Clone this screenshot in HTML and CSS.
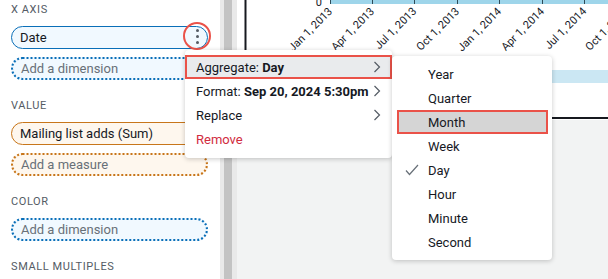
FILE: index.html
```html
<!DOCTYPE html>
<html lang="en">
<head>
  <meta charset="UTF-8" />
  <title>Field wells</title>
  <link rel="stylesheet" href="styles.css">
</head>
<body>
  <div class="sidebar">
    <div class="section">
      <div class="section-label">X axis</div>
      <div class="pill pill-dim">
        Date
        <span class="kebab"><i></i><i></i><i></i></span>
      </div>
      <div class="pill pill-dim pill-empty">Add a dimension</div>
    </div>
    <div class="section">
      <div class="section-label">Value</div>
      <div class="pill pill-measure">Mailing list adds (Sum)</div>
      <div class="pill pill-measure pill-empty">Add a measure</div>
    </div>
    <div class="section">
      <div class="section-label">Color</div>
      <div class="pill pill-dim pill-empty">Add a dimension</div>
    </div>
    <div class="section">
      <div class="section-label">Small multiples</div>
    </div>
  </div>

  <div class="scrollbar"><div class="thumb"></div></div>

  <div class="main">
    <div class="chart">
      <svg width="371" height="120" viewBox="0 0 371 120">
        <rect x="93" y="0" width="278" height="4" fill="#9ed5ea" />
        <g stroke="#2f4b57" stroke-width="1">
          <line x1="93.5" y1="0" x2="93.5" y2="4" />
          <line x1="135.5" y1="0" x2="135.5" y2="4" />
          <line x1="177.5" y1="0" x2="177.5" y2="4" />
          <line x1="220.5" y1="0" x2="220.5" y2="4" />
          <line x1="262.5" y1="0" x2="262.5" y2="4" />
          <line x1="305.5" y1="0" x2="305.5" y2="4" />
          <line x1="347.5" y1="0" x2="347.5" y2="4" />
        </g>
        <text class="axis-text" x="85" y="6" text-anchor="end">0</text>
        <g class="axis-text" text-anchor="end">
          <text transform="translate(96,12) rotate(-45)">Jan 1, 2013</text>
          <text transform="translate(138,12) rotate(-45)">Apr 1, 2013</text>
          <text transform="translate(180,12) rotate(-45)">Jul 1, 2013</text>
          <text transform="translate(223,12) rotate(-45)">Oct 1, 2013</text>
          <text transform="translate(265,12) rotate(-45)">Jan 1, 2014</text>
          <text transform="translate(308,12) rotate(-45)">Apr 1, 2014</text>
          <text transform="translate(350,12) rotate(-45)">Jul 1, 2014</text>
          <text transform="translate(392,12) rotate(-45)">Oct 1, 2014</text>
        </g>
        <rect x="8" y="70" width="363" height="13" fill="#cbe7f3" />
        <line x1="8.5" y1="0" x2="8.5" y2="119" stroke="#16191f" stroke-width="2" />
        <line x1="8" y1="118" x2="371" y2="118" stroke="#16191f" stroke-width="2" />
      </svg>
    </div>
  </div>

  <div class="menu">
    <div class="menu-item active">
      <span>Aggregate: <b>Day</b></span>
      <svg class="chevron" width="8" height="12" viewBox="0 0 8 12"><polyline points="1.5,1 6.5,6 1.5,11" /></svg>
    </div>
    <div class="menu-item">
      <span>Format: <b>Sep 20, 2024 5:30pm</b></span>
      <svg class="chevron" width="8" height="12" viewBox="0 0 8 12"><polyline points="1.5,1 6.5,6 1.5,11" /></svg>
    </div>
    <div class="menu-item">
      <span>Replace</span>
      <svg class="chevron" width="8" height="12" viewBox="0 0 8 12"><polyline points="1.5,1 6.5,6 1.5,11" /></svg>
    </div>
    <div class="menu-item danger"><span>Remove</span></div>
  </div>

  <div class="submenu">
    <div class="sub-item">Year</div>
    <div class="sub-item">Quarter</div>
    <div class="sub-item active">Month</div>
    <div class="sub-item">Week</div>
    <div class="sub-item">
      <svg class="check" width="14" height="12" viewBox="0 0 14 12"><polyline points="1,6.5 4.5,10.5 13,1" /></svg>
      Day
    </div>
    <div class="sub-item">Hour</div>
    <div class="sub-item">Minute</div>
    <div class="sub-item">Second</div>
  </div>
</body>
</html>
```

FILE: styles.css
```css
body {
  margin: 0;
  width: 608px;
  height: 279px;
  overflow: hidden;
  position: relative;
  display: flex;
  font-family: Roboto, "Liberation Sans", sans-serif;
  font-size: 13px;
  color: #16191f;
  background: #f2f3f3;
}
.sidebar {
  width: 220px;
  flex-shrink: 0;
  background: white;
  padding: 3px 12px 0 11px;
  box-sizing: border-box;
}
.section {
  display: flex;
  flex-direction: column;
  gap: 8px;
  margin-bottom: 19px;
}
.section-label {
  font-size: 11px;
  line-height: 14px;
  text-transform: uppercase;
  letter-spacing: 0.6px;
  color: #545b64;
  margin-bottom: 1px;
}
.pill {
  position: relative;
  height: 23px;
  box-sizing: border-box;
  border-radius: 12px;
  padding-left: 8px;
  display: flex;
  align-items: center;
}
.pill-dim {
  border: 1.5px solid #0a6fb8;
  background: #f1f9ff;
}
.pill-measure {
  border: 1.5px solid #c8761a;
  background: #fef7ee;
}
.pill-empty {
  border-width: 2px;
  border-style: dotted;
  color: #687078;
}
.kebab {
  position: absolute;
  right: -4px;
  top: -5px;
  width: 24px;
  height: 24px;
  border: 2.5px solid #ea5249;
  border-radius: 50%;
  display: flex;
  flex-direction: column;
  align-items: center;
  justify-content: center;
  gap: 3px;
}
.kebab i {
  width: 3px;
  height: 3px;
  border-radius: 50%;
  background: #545b64;
}
.scrollbar {
  width: 17px;
  flex-shrink: 0;
  background: #e9e9e9;
  padding: 0 5px 0 4px;
  box-sizing: border-box;
}
.thumb {
  height: 100%;
  background: #c3c3c3;
}
.main {
  flex: 1;
}
.chart {
  height: 120px;
  background: white;
}
.chart svg {
  display: block;
}
.axis-text {
  font-size: 11px;
  fill: #16191f;
}
.menu {
  position: absolute;
  left: 185px;
  top: 50px;
  width: 207px;
  padding: 5px 0 7px;
  background: white;
  border-radius: 4px;
  box-shadow: 0 1px 5px rgba(0, 0, 0, 0.22);
}
.menu-item {
  height: 24px;
  padding: 0 11px;
  display: flex;
  align-items: center;
  justify-content: space-between;
}
.menu-item b {
  font-weight: 700;
}
.menu-item.active {
  background: #e9ebed;
  box-shadow: inset 0 0 0 2px #ea5249;
}
.menu-item.danger {
  color: #d12c3e;
}
.chevron polyline {
  fill: none;
  stroke: #545b64;
  stroke-width: 1.2;
}
.submenu {
  position: absolute;
  left: 392px;
  top: 56px;
  width: 160px;
  padding: 6px 0;
  background: white;
  border-radius: 4px;
  box-shadow: 0 1px 5px rgba(0, 0, 0, 0.22);
}
.sub-item {
  position: relative;
  height: 24px;
  padding-left: 36px;
  display: flex;
  align-items: center;
}
.sub-item.active {
  margin: 0 4px 0 5px;
  padding-left: 31px;
  background: #d5d5d5;
  box-shadow: inset 0 0 0 2px #ea5249;
}
.check {
  position: absolute;
  left: 13px;
  top: 6px;
}
.check polyline {
  fill: none;
  stroke: #687078;
  stroke-width: 1.2;
}
```
